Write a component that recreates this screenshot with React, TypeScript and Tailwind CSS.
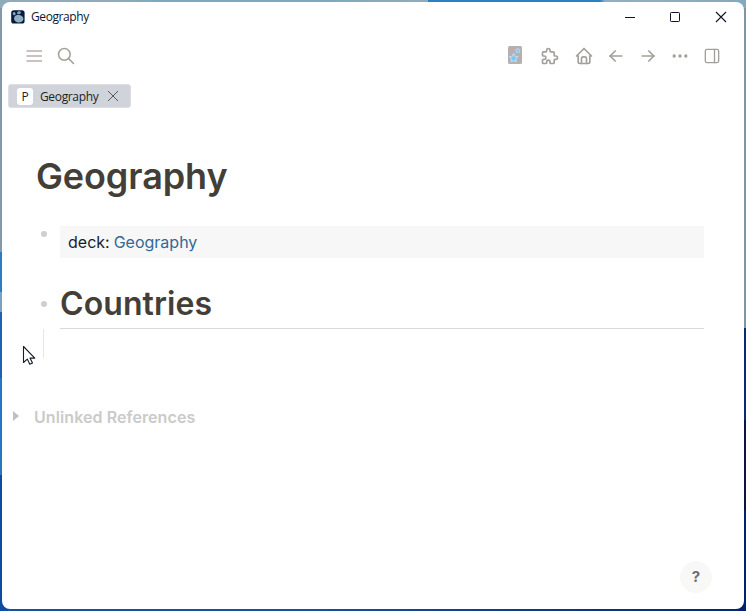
import type { ReactNode } from 'react';
import { TbArrowLeft, TbArrowRight, TbDots, TbHome, TbLayoutSidebarRight, TbPuzzle, TbSearch } from 'react-icons/tb';

const desktopBackground =
  "bg-[linear-gradient(90deg,#8fabbb_0_110px,#7fa9c0_150px_330px,#8fabbb_428px,#2a80c4_428px_600px,#8fb0c4_605px,#84a9bf_746px),linear-gradient(180deg,#8399a8_0_252px,#2a7cc4_252px_292px,#7ba0bd_292px_312px,#1d63b4_312px_378px,#2477c4_378px_455px,#2a76bc_455px_475px,#0f4ba0_475px_611px),linear-gradient(180deg,#7d96a5_0_328px,#0a2a72_328px_420px,#0a1440_420px_510px,#052070_510px_611px),linear-gradient(90deg,#1552a0_0_300px,#07266e_746px)] bg-no-repeat [background-position:0_0,0_0,738px_0,0_603px] [background-size:746px_8px,8px_611px,8px_611px,746px_8px]";

function Tool({ children }: { children: ReactNode }) {
  return <div className="flex h-5 w-5 items-center justify-center">{children}</div>;
}

function AppLogo() {
  return (
    <svg width="14" height="14" viewBox="0 0 14 14">
      <rect x="0.2" y="0.2" width="13.4" height="13.4" rx="2.6" fill="#071b3e" />
      <ellipse cx="7.7" cy="8.7" rx="4.7" ry="3.8" transform="rotate(8 7.7 8.7)" fill="#8fb0c2" />
      <ellipse cx="8" cy="2.7" rx="2" ry="1.4" fill="#86a8bc" transform="rotate(-15 8 2.7)" />
      <ellipse cx="3.2" cy="3.7" rx="1.4" ry="1.6" fill="#86a8bc" transform="rotate(-30 3.2 3.7)" />
    </svg>
  );
}

function TitleBar() {
  return (
    <header className="flex h-[29px] items-center pl-[9px] pr-[17px] text-[#111827]">
      <AppLogo />
      <span className="ml-[6px] font-['Open_Sans','Noto_Sans',sans-serif] text-[12px] leading-4 tracking-[-0.4px]">Geography</span>
      <svg className="ml-auto" width="102" height="12" viewBox="0 0 102 12" fill="none" stroke="#101426">
        <path d="M0 6.5h10" />
        <rect x="45.5" y="1.5" width="9" height="9" rx="0.8" />
        <path d="M91 1l10 10M101 1l-10 10" strokeWidth="1.1" />
      </svg>
    </header>
  );
}

function Toolbar() {
  return (
    <nav className="flex h-[50px] items-center pl-[22px] pr-[22px] text-[#a3a09a]">
      <Tool>
        <svg width="20" height="20" viewBox="0 0 20 20" stroke="#b9afad" strokeWidth="1.7">
          <path d="M2.5 5h15.5M2.5 10h15.5M2.5 15h15.5" />
        </svg>
      </Tool>
      <div className="ml-3"><Tool><TbSearch size={20} strokeWidth={1.9} /></Tool></div>
      <div className="ml-auto flex items-center">
        <Tool>
          <svg width="20" height="20" viewBox="0 0 20 20" strokeLinejoin="round">
            <rect x="3" y="0" width="14" height="18" rx="1.6" fill="#b8b0ae" />
            <path d="M8.6 7.6L10 10.2L13 10.6L10.9 12.7L11.4 15.7L8.7 14.4L6 15.8L6.4 12.8L4.3 10.7L7.3 10.2Z" fill="#7cc6f6" stroke="#b4dcf5" strokeWidth="1.1" />
            <path d="M12.8 2L13.5 3.5L15.2 3.8L14 5L14.3 6.7L12.8 5.9L11.2 6.7L11.5 5L10.3 3.8L12 3.5Z" fill="#7cc6f6" stroke="#b4dcf5" strokeWidth=".9" />
          </svg>
        </Tool>
        <div className="ml-[15px]"><Tool><TbPuzzle size={20} strokeWidth={2} /></Tool></div>
        <div className="ml-[14px]"><Tool><TbHome size={20} strokeWidth={2} /></Tool></div>
        <div className="ml-3"><Tool><TbArrowLeft size={20} strokeWidth={2} /></Tool></div>
        <div className="ml-3"><Tool><TbArrowRight size={20} strokeWidth={2} /></Tool></div>
        <div className="ml-3"><Tool><TbDots size={20} strokeWidth={2} /></Tool></div>
        <div className="ml-3"><Tool><TbLayoutSidebarRight size={20} strokeWidth={1.6} /></Tool></div>
      </div>
    </nav>
  );
}

function PageTab() {
  return (
    <div className="ml-[6px] mt-[3px] flex h-6 w-[123px] items-center rounded-[3px] border border-[#dcdee3] bg-[#d0d3d9] pl-2 font-['Open_Sans','Noto_Sans',sans-serif] text-[12px] leading-4 text-[#1f2328]">
      <span className="flex h-[17px] w-4 items-center justify-center rounded-[3px] bg-white pt-px text-[12px]">P</span>
      <span className="ml-[7px] pt-[2px] tracking-[-0.35px]">Geography</span>
      <svg className="ml-auto mr-[11px]" width="12" height="12" viewBox="0 0 12 12" stroke="#555960" strokeWidth="1">
        <path d="M1 1l10 10M11 1L1 11" />
      </svg>
    </div>
  );
}

function Bullet() {
  return <span className="h-[6px] w-[6px] shrink-0 rounded-full bg-[#cfcfcf]" />;
}

export default function App() {
  return (
    <div className={`relative h-[611px] w-[746px] overflow-hidden p-[2px] ${desktopBackground}`}>
      <div className="flex h-[607px] w-[742px] flex-col rounded-lg bg-white font-['Inter',sans-serif]">
        <TitleBar />
        <Toolbar />
        <PageTab />
        <main className="flex flex-col">
          <h1 className="ml-[34px] mt-[45px] h-[46px] text-[36px] font-semibold leading-[46px] tracking-[-0.1px] text-[#433f38]">Geography</h1>
          <section className="ml-[39px] mt-[27px] flex w-[663px] items-start">
            <div className="flex h-4 items-center"><Bullet /></div>
            <div className="ml-[13px] flex h-8 flex-1 items-center bg-[#f7f7f7] pl-2 text-[16px] leading-6">
              <span className="text-[#161e2b]">deck:</span>
              <a className="ml-1 text-[#316a96]">Geography</a>
            </div>
          </section>
          <section className="ml-[39px] mt-[23px] flex w-[663px] items-start">
            <div className="flex h-[46px] items-center"><Bullet /></div>
            <h2 className="ml-[13px] h-[48px] flex-1 border-b border-[#dadada] text-[32px] font-semibold leading-[46px] tracking-[0.08px] text-[#433f38]">Countries</h2>
          </section>
          <div className="ml-[41px] h-[29px] w-px bg-[#e6e6e6]" />
          <section className="ml-[11px] mt-[47px] flex h-6 items-center text-[#cacaca]">
            <svg className="mb-[2px]" width="6" height="10" viewBox="0 0 6 10"><path d="M0 0l6 5-6 5z" fill="#c0c0c0" /></svg>
            <h3 className="ml-[15px] text-[16px] font-semibold leading-6 tracking-[0.08px]">Unlinked References</h3>
          </section>
        </main>
        <button className="mb-4 ml-[678px] mt-auto flex h-8 w-8 items-center justify-center rounded-full bg-[#f8f8f7] pt-px text-[15px] font-bold text-[#687078]">?</button>
      </div>
      <svg className="absolute left-[22px] top-[345px]" width="14" height="21" viewBox="0 0 14 21">
        <path d="M1.5 1.5v16l3.8-3.4 2.5 5.2 2.7-1.2-2.5-5h4.8z" fill="white" stroke="#171b2a" strokeWidth="1.1" strokeLinejoin="round" />
      </svg>
    </div>
  );
}
